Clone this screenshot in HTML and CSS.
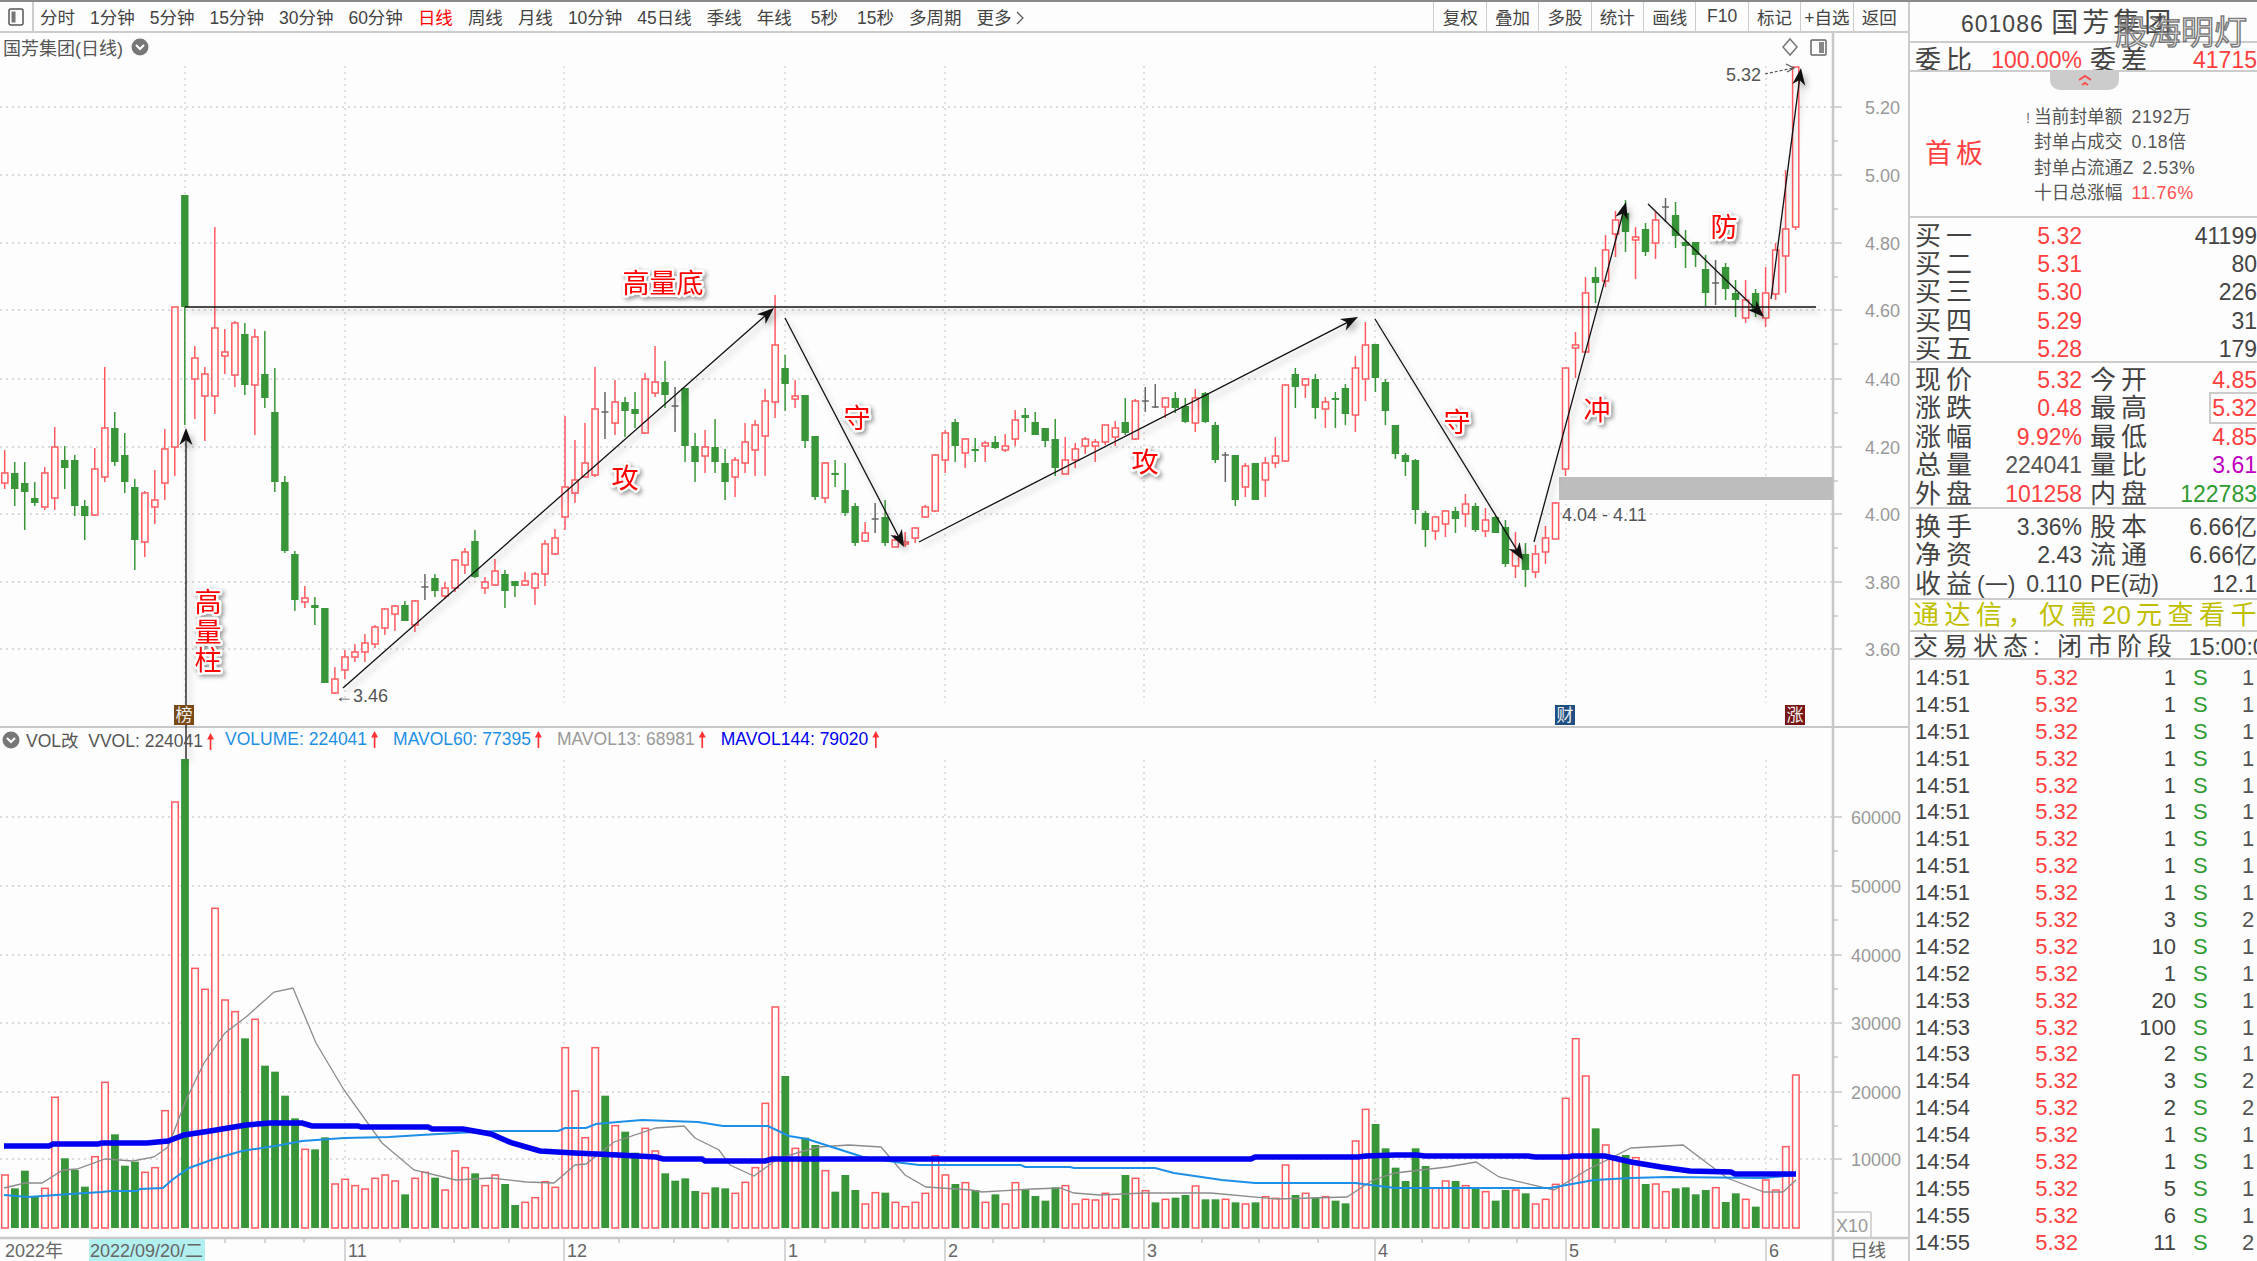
FILE: index.html
```html
<!DOCTYPE html>
<html lang="zh-CN">
<head>
    <meta charset="UTF-8">
    <meta name="viewport" content="width=device-width, initial-scale=1.0">
    <title>国芳集团 日线</title>
    <link rel="stylesheet" href="styles.css">
</head>
<body>
    <div class="main">
        <nav class="toolbar">
            <button class="tool-toggle" type="button">
                <svg width="16" height="18" viewBox="0 0 16 18"><rect x="1" y="1" width="14" height="16" rx="2" fill="none" stroke="#555" stroke-width="1.5"/><rect x="3.5" y="3.5" width="4" height="11" fill="#777"/></svg>
            </button>
            <div class="periods">
                <span>分时</span><span>1分钟</span><span>5分钟</span><span>15分钟</span><span>30分钟</span><span>60分钟</span>
                <span class="active">日线</span><span>周线</span><span>月线</span><span>10分钟</span><span>45日线</span><span>季线</span>
                <span>年线</span><span class="wide">5秒</span><span class="wide">15秒</span><span>多周期</span>
                <span class="more">更多<svg width="8" height="14" viewBox="0 0 8 14"><path d="M1 1l6 6-6 6" fill="none" stroke="#555" stroke-width="1.2"/></svg></span>
            </div>
            <div class="actions">
                <span>复权</span><span>叠加</span><span>多股</span><span>统计</span><span>画线</span><span>F10</span><span>标记</span><span>+自选</span><span>返回</span>
            </div>
        </nav>
        <div class="chart" id="chart">
            <div class="chart-title">国芳集团(日线)
                <svg width="18" height="18" viewBox="0 0 18 18"><circle cx="9" cy="9" r="8.5" fill="#777"/><path d="M5 7l4 4 4-4" fill="none" stroke="#fff" stroke-width="2"/></svg>
            </div>
            <div class="vol-legend">
                <svg width="18" height="18" viewBox="0 0 18 18"><circle cx="9" cy="9" r="8.5" fill="#777"/><path d="M5 7l4 4 4-4" fill="none" stroke="#fff" stroke-width="2"/></svg>
                <span class="gray-dark first">VOL改&nbsp; VVOL: 224041<i></i></span>
                <span class="sky">VOLUME: 224041<i></i></span>
                <span class="sky">MAVOL60: 77395<i></i></span>
                <span class="gray-light">MAVOL13: 68981<i></i></span>
                <span class="blue">MAVOL144: 79020<i></i></span>
            </div>
        </div>
    </div>

    <aside class="panel">
        <div class="watermark">股海明灯</div>
        <div class="stock-name">601086 <b>国芳集团</b></div>

        <section class="ratio">
            <div class="q-row">
                <div class="half"><span class="name">委比</span><span class="red">100.00%</span></div>
                <div class="half"><span class="name">委差</span><span class="red">41715</span></div>
            </div>
        </section>

        <section class="seal">
            <div class="collapse-tab">
                <svg width="18" height="14" viewBox="0 0 18 14"><path d="M3 6l6-4 6 4M6 11l3-2 3 2" fill="none" stroke="#ff4d4d" stroke-width="2"/></svg>
            </div>
            <div class="seal-tag">首板</div>
            <div class="seal-list">
                <div><em>!</em>当前封单额<span>2192万</span></div>
                <div>封单占成交<span>0.18倍</span></div>
                <div>封单占流通Z<span>2.53%</span></div>
                <div>十日总涨幅<span class="red">11.76%</span></div>
            </div>
        </section>

        <section class="book">
            <div class="book-row"><span class="name">买一</span><span class="red">5.32</span><span>41199</span></div>
            <div class="book-row"><span class="name">买二</span><span class="red">5.31</span><span>80</span></div>
            <div class="book-row"><span class="name">买三</span><span class="red">5.30</span><span>226</span></div>
            <div class="book-row"><span class="name">买四</span><span class="red">5.29</span><span>31</span></div>
            <div class="book-row"><span class="name">买五</span><span class="red">5.28</span><span>179</span></div>
        </section>

        <section class="quote">
            <div class="q-row">
                <div class="half"><span class="name">现价</span><span class="red">5.32</span></div>
                <div class="half"><span class="name">今开</span><span class="red">4.85</span></div>
            </div>
            <div class="q-row">
                <div class="half"><span class="name">涨跌</span><span class="red">0.48</span></div>
                <div class="half"><span class="name">最高</span><span class="red boxed">5.32</span></div>
            </div>
            <div class="q-row">
                <div class="half"><span class="name">涨幅</span><span class="red">9.92%</span></div>
                <div class="half"><span class="name">最低</span><span class="red">4.85</span></div>
            </div>
            <div class="q-row">
                <div class="half"><span class="name">总量</span><span class="muted">224041</span></div>
                <div class="half"><span class="name">量比</span><span class="magenta">3.61</span></div>
            </div>
            <div class="q-row">
                <div class="half"><span class="name">外盘</span><span class="red">101258</span></div>
                <div class="half"><span class="name">内盘</span><span class="green">122783</span></div>
            </div>
        </section>

        <section class="fund">
            <div class="q-row">
                <div class="half"><span class="name">换手</span><span>3.36%</span></div>
                <div class="half"><span class="name">股本</span><span>6.66亿</span></div>
            </div>
            <div class="q-row">
                <div class="half"><span class="name">净资</span><span>2.43</span></div>
                <div class="half"><span class="name">流通</span><span>6.66亿</span></div>
            </div>
            <div class="q-row">
                <div class="half"><span class="name">收益<small>(一)</small></span><span>0.110</span></div>
                <div class="half"><span class="name tight">PE(动)</span><span>12.1</span></div>
            </div>
        </section>

        <div class="notice">通达信，仅需<span>20</span>元查看千档</div>
        <div class="status">交易状态: 闭市阶段 <span>15:00:00</span></div>
        <div class="trades" id="trades"></div>
    </aside>

    <script src="chart.js"></script>
</body>
</html>
```

FILE: styles.css
```css
html, body {
    height: 100%;
    margin: 0;
    padding: 0;
}

body {
    display: flex;
    height: 1261px;
    overflow: hidden;
    box-sizing: border-box;
    border-top: 2px solid #8a8a8a;
    background-color: #fdfdfd;
    color: #444;
    font-family: "Liberation Sans", "Noto Sans CJK SC", sans-serif;
}

.main {
    width: 1908px;
    display: flex;
    flex-direction: column;
    flex-shrink: 0;
}

/* top bar */
.toolbar {
    height: 29px;
    display: flex;
    align-items: center;
    border-bottom: 2px solid #ccc;
    font-size: 17.5px;
    color: #444;
}

.tool-toggle {
    width: 34px;
    height: 100%;
    padding: 0;
    display: flex;
    align-items: center;
    justify-content: center;
    background: none;
    border: none;
    border-right: 2px solid #ccc;
}

.periods {
    display: flex;
    gap: 15px;
    margin-left: 6px;
    white-space: nowrap;
}

.periods .active {
    color: #f00;
}

.periods .wide {
    margin-left: 4px;
}

.periods .more svg {
    margin-left: 4px;
    vertical-align: -1px;
}

.actions {
    margin-left: auto;
    padding-right: 3px;
    display: flex;
    height: 100%;
}

.actions span {
    width: 52.4px;
    box-sizing: border-box;
    display: flex;
    align-items: center;
    justify-content: center;
    border-left: 1px solid #ccc;
}

/* chart canvas */
.chart {
    position: relative;
    flex: 1;
}

.chart svg.canvas {
    display: block;
    position: absolute;
    left: 0;
    top: 0;
}

.chart-title {
    position: absolute;
    z-index: 2;
    left: 3px;
    top: 1px;
    display: flex;
    align-items: center;
    gap: 8px;
    font-size: 18px;
    color: #555;
}

.vol-legend {
    position: absolute;
    z-index: 2;
    left: 2px;
    top: 694px;
    display: flex;
    align-items: center;
    gap: 15px;
    font-size: 17.5px;
    white-space: nowrap;
}

.vol-legend svg {
    margin-right: -9px;
}

.vol-legend .first {
    margin-right: -4px;
}

/* little red up arrow behind each legend value */
.vol-legend i {
    display: inline-block;
    width: 7px;
    height: 17px;
    margin-left: 4px;
    vertical-align: -3px;
    background-color: #f33;
    clip-path: polygon(50% 0, 100% 38%, 62% 38%, 62% 100%, 38% 100%, 38% 38%, 0 38%);
}

.gray-dark { color: #555; }
.gray-light { color: #999; }
.sky { color: #1e8fe6; }
.blue { color: #0000f0; }

.axis-text {
    font-size: 18px;
    fill: #999;
    text-anchor: end;
}

.mark-text {
    font-size: 18px;
    fill: #555;
}

.month-text {
    font-size: 18px;
    fill: #666;
}

.badge-text {
    font-size: 17px;
    fill: #eee;
    text-anchor: middle;
}

.marks {
    filter: drop-shadow(3px 4px 3px rgba(0, 0, 0, 0.3));
}

.tag {
    font-size: 27px;
    fill: #f00;
    stroke: #fff;
    stroke-width: 5px;
    stroke-linejoin: round;
    paint-order: stroke;
    text-anchor: middle;
    filter: drop-shadow(2px 2px 2px rgba(0, 0, 0, 0.4));
}

/* right panel */
.panel {
    position: relative;
    flex: 1;
    min-width: 0;
    display: flex;
    flex-direction: column;
    border-left: 2px solid #ccc;
    overflow: hidden;
    font-size: 23px;
    color: #444;
}

.panel section,
.stock-name,
.notice,
.status {
    border-bottom: 2px solid #ccc;
    box-sizing: border-box;
    flex-shrink: 0;
}

.watermark {
    position: absolute;
    z-index: 3;
    left: 205px;
    top: 10px;
    font-size: 33px;
    line-height: 42px;
    white-space: nowrap;
    color: rgba(255, 255, 255, 0.55);
    -webkit-text-stroke: 1.5px rgba(90, 90, 90, 0.8);
}

.stock-name {
    height: 41px;
    padding-left: 51px;
    padding-top: 3px;
    font-size: 23px;
    line-height: 36px;
    letter-spacing: 1px;
    white-space: nowrap;
    overflow: hidden;
}

.stock-name b {
    font-weight: normal;
    font-size: 27px;
    letter-spacing: 4px;
}

.red { color: #ff4040; }
.green { color: #2f9a2f; }
.magenta { color: #c000c0; }
.muted { color: #555; }

.name {
    font-size: 26px;
    letter-spacing: 5px;
    white-space: nowrap;
}

.name small {
    font-size: 23px;
    letter-spacing: 0;
}

.name.tight {
    font-size: 23px;
    letter-spacing: 0;
}

.q-row {
    display: grid;
    grid-template-columns: 1fr 1fr;
    gap: 8px;
    padding-left: 5px;
    height: 28.4px;
    line-height: 28.4px;
}

.half {
    display: flex;
    justify-content: space-between;
    white-space: nowrap;
    position: relative;
}

.ratio {
    height: 29px;
    padding-top: 3px;
    overflow: hidden;
}

.seal {
    height: 146px;
    padding-top: 14px;
    position: relative;
    display: flex;
    align-items: center;
}

.collapse-tab {
    position: absolute;
    left: 140px;
    top: 0;
    width: 69px;
    height: 18px;
    display: flex;
    align-items: center;
    justify-content: center;
    background-color: #ccc;
    border-radius: 0 0 10px 10px;
}

.seal-tag {
    margin-left: 15px;
    width: 109px;
    font-size: 27px;
    letter-spacing: 4px;
    color: #ff4040;
}

.seal-list {
    margin-top: 9px;
    font-size: 17.7px;
    line-height: 25.5px;
    color: #555;
    white-space: nowrap;
}

.seal-list div {
    position: relative;
}

.seal-list em {
    position: absolute;
    left: -8px;
    font-style: normal;
    color: #777;
    font-size: 15px;
}

.seal-list span {
    margin-left: 9px;
    letter-spacing: 0.6px;
}

.seal-list .red {
    color: #ff5050;
}

.book {
    height: 145px;
    padding-top: 4px;
}

.book-row {
    display: grid;
    grid-template-columns: 90px 77px 1fr;
    padding-left: 5px;
    height: 28.2px;
    line-height: 28.2px;
}

.book-row span:nth-child(2),
.book-row span:nth-child(3) {
    text-align: right;
}

.quote {
    height: 146px;
    padding-top: 3px;
}

.boxed {
    position: relative;
}

.boxed::before {
    content: "";
    position: absolute;
    left: -3px;
    right: -6px;
    top: -2px;
    bottom: -1px;
    border: 2px solid #ccc;
}

.fund {
    height: 91px;
    padding-top: 4px;
}

.notice {
    height: 32px;
    padding-left: 3px;
    font-size: 26px;
    line-height: 31px;
    letter-spacing: 5.5px;
    color: #bfbf00;
    white-space: nowrap;
    overflow: hidden;
}

.notice span {
    letter-spacing: 0;
    margin-right: 5px;
}

.status {
    height: 28px;
    padding-left: 3px;
    font-size: 25px;
    line-height: 28px;
    letter-spacing: 5px;
    white-space: nowrap;
    overflow: hidden;
}

.status span {
    font-size: 23px;
    letter-spacing: 0;
}

.trades {
    padding-top: 5px;
}

.trade-row {
    display: grid;
    grid-template-columns: 60px 103px 98px 23px 1fr;
    height: 26.9px;
    line-height: 26.9px;
    padding-left: 5px;
    font-size: 22px;
    white-space: nowrap;
}

.trade-row .price,
.trade-row .vol {
    text-align: right;
}

.trade-row .side {
    padding-left: 17px;
    color: #2f9a2f;
}

.trade-row .last {
    padding-left: 43px;
    color: #555;
}
```

FILE: chart.js
```js
document.addEventListener('DOMContentLoaded', () => {
    const R = 0, G = 1, N = 2;

    // [kind, high, bodyTop, bodyBottom, low] as page y values
    const candles = [
        [R,450,473,483,489],[G,462,473,489,506],[G,462,483,492,530],[G,482,498,503,506],[R,467,473,507,510],
        [R,427,447,498,510],[G,446,460,468,489],[G,455,460,506,516],[G,500,506,516,540],[R,448,469,515,516],
        [R,367,428,477,482],[G,412,428,462,466],[G,433,455,482,493],[G,479,487,540,570],[R,491,493,542,557],
        [R,470,500,507,524],[R,429,449,483,500],[R,307,307,447,476],[G,195,195,307,425],[R,346,358,379,419],
        [R,367,374,396,441],[R,227,328,396,414],[R,329,352,356,374],[R,321,323,375,387],[G,323,334,385,395],
        [R,329,337,385,435],[G,331,374,398,408],[G,368,412,482,492],[G,476,482,551,553],[G,551,554,600,611],
        [R,586,598,602,608],[G,597,605,608,625],[G,608,608,683,683],[R,667,679,693,694],[R,650,657,670,679],
        [R,644,652,657,662],[R,634,643,652,662],[R,625,627,644,648],[R,608,609,628,635],[R,605,606,614,631],
        [G,601,605,621,621],[R,600,601,625,632],[N,574,587,588,600],[G,574,578,591,597],[R,582,588,596,599],
        [R,559,560,588,592],[R,548,552,565,574],[G,530,541,577,578],[R,577,582,588,594],[R,559,571,585,586],
        [G,570,574,591,608],[G,581,581,586,597],[R,572,581,585,586],[R,572,574,588,605],[R,540,544,574,586],
        [R,529,538,554,555],[R,416,487,517,530],[R,440,480,493,503],[R,423,463,477,477],[R,367,409,475,477],
        [N,392,412,413,439],[R,380,402,423,435],[G,397,402,411,437],[G,392,409,414,428],[R,373,379,433,434],
        [R,346,382,393,397],[G,361,382,395,408],[N,387,406,407,432],[G,388,388,446,462],[G,433,446,462,482],
        [R,430,447,456,473],[G,419,447,462,473],[G,449,463,482,500],[R,457,460,477,497],[R,423,442,463,473],
        [R,420,425,450,476],[R,389,401,436,476],[R,295,345,402,418],[G,355,368,384,411],[R,380,396,399,408],
        [G,395,395,441,448],[G,436,436,497,500],[R,462,463,498,503],[G,460,473,475,487],[G,463,490,513,516],
        [G,503,506,543,546],[R,522,533,541,542],[N,503,519,520,533],[G,500,517,543,546],[R,535,540,547,547],
        [R,532,542,544,547],[R,527,528,538,543],[R,505,507,517,518],[R,454,455,511,512],[R,430,433,460,473],
        [G,419,422,446,462],[R,438,439,453,468],[G,438,449,451,462],[R,441,443,446,462],[G,436,442,448,449],
        [R,434,446,450,452],[R,410,420,439,446],[G,408,415,418,432],[G,412,422,435,435],[G,428,428,441,447],
        [G,419,439,468,476],[R,437,460,474,474],[R,443,449,460,468],[R,437,439,446,454],[R,439,442,446,462],
        [R,425,425,442,445],[R,421,428,437,446],[G,398,422,433,435],[R,399,401,439,440],[N,387,401,402,412],
        [N,384,407,407,408],[R,397,398,407,418],[G,392,398,408,413],[G,398,406,422,423],[R,389,398,423,432],
        [G,392,393,422,423],[G,422,425,460,463],[N,452,455,456,482],[G,455,455,500,506],[R,463,466,487,497],
        [G,463,463,500,500],[R,457,463,480,497],[R,437,456,463,468],[R,384,385,461,462],[G,368,374,387,408],
        [R,378,379,385,398],[G,374,379,408,419],[R,397,402,409,428],[G,392,398,400,428],[G,384,388,414,425],
        [R,356,368,415,432],[R,322,345,379,401],[G,344,344,378,392],[G,379,382,411,425],[G,425,425,454,459],
        [G,453,455,462,476],[G,459,460,510,524],[G,511,513,530,547],[R,516,517,531,540],[R,510,511,524,537],
        [G,507,511,519,533],[R,494,504,514,527],[G,503,506,530,532],[R,508,520,531,537],[G,516,517,533,533],
        [G,520,527,564,567],[R,532,552,566,578],[G,543,554,570,587],[R,545,554,572,578],[R,526,538,552,564],
        [R,502,503,539,539],[R,368,368,469,476],[R,332,345,348,378],[R,277,293,352,352],[G,267,277,283,303],
        [R,235,250,281,287],[R,211,220,234,257],[G,200,213,232,252],[R,227,237,240,279],[G,223,229,252,256],
        [R,212,220,243,259],[N,198,207,208,222],[G,202,215,236,248],[G,230,242,246,268],[G,242,242,255,267],
        [G,255,269,293,306],[N,260,283,284,305],[G,263,267,289,300],[G,280,293,300,317],[R,280,300,318,323],
        [G,289,293,310,317],[R,267,293,318,327],[R,243,250,294,300],[R,170,229,256,293],[R,67,67,227,230]
    ];

    // volume bar tops, in thirds of a pixel below y = 860
    const volumes = [
        945,985,932,1010,985,712,895,930,980,890,667,823,917,905,937,923,752,-174,-303,325,
        388,145,420,455,535,478,617,635,707,775,868,868,832,972,958,977,987,955,945,963,
        1003,955,937,953,990,873,923,940,977,945,972,1035,1027,1013,965,982,563,693,833,563,
        707,797,815,878,805,873,940,962,955,993,1000,982,985,1000,967,923,730,441,648,865,
        833,855,932,995,945,990,1032,998,998,1027,1040,1027,1000,887,945,972,968,990,1027,1003,
        1032,968,990,1008,1022,982,977,1032,1018,1020,1000,1018,945,955,992,1027,1018,1013,1005,978,
        1018,1018,1018,1027,1032,1027,1010,1015,915,1005,1000,1012,1010,1022,1030,843,748,792,865,923,
        963,865,918,985,963,963,977,982,995,1022,990,990,1000,1032,1018,973,715,536,648,805,
        855,890,885,893,972,972,995,985,982,1003,990,983,1026,1000,1018,1040,960,990,860,645
    ];
    // R or G per volume bar, twenty days to a chunk
    const volKinds = [
        'RGGGRRGGGRRGGGRRRRGR', 'RRRRGRGGGGRGGRRRRRRR', 'GRRGRRRGRRGGRRRRRRRR', 'GRGGRRGGGGRGGRRRRRGR',
        'GGRGGGRRGRRRRRRGRGRG', 'RRGGGGRRRRRRGRRGRGGR', 'GGRGRGRRRGRGRGGRRGGG', 'GGGRRGRGRGGRGRRRRRRG',
        'RRGRGRRGGGGRGGRGRRRR'
    ].join('');

    const priceGrid = [[107,'5.20'],[175,'5.00'],[243,'4.80'],[310,'4.60'],[379,'4.40'],[447,'4.20'],[514,'4.00'],[582,'3.80'],[649,'3.60']];
    const volGrid = [[817,'60000'],[886,'50000'],[955,'40000'],[1023,'30000'],[1092,'20000'],[1159,'10000']];
    const months = [[345,'11'],[564,'12'],[785,'1'],[945,'2'],[1144,'3'],[1375,'4'],[1566,'5'],[1766,'6']];
    const minorTicks = [225,265,304,400,454,509,619,674,728,825,865,904,993,1044,1202,1259,1318,1422,1469,1517,1615,1666,1715];

    const ma144 = [[4,1146],[49,1146],[53,1144],[98,1144],[102,1143],[147,1143],[168,1141],[184,1135],[210,1131],[246,1125],[270,1123],[302,1123],[312,1126],[358,1126],[361,1127],[428,1127],[432,1129],[463,1129],[491,1134],[512,1143],[540,1151],[575,1153],[618,1155],[656,1157],[663,1159],[702,1159],[705,1161],[765,1161],[772,1159],[1251,1159],[1255,1157],[1358,1157],[1366,1156],[1395,1155],[1417,1155],[1425,1156],[1528,1156],[1535,1157],[1569,1157],[1572,1156],[1605,1156],[1631,1162],[1661,1167],[1690,1171],[1731,1172],[1735,1174],[1796,1174]];
    const ma60 = [[4,1195],[28,1197],[70,1194],[102,1192],[112,1191],[137,1191],[140,1189],[163,1188],[172,1180],[189,1168],[214,1159],[242,1151],[281,1145],[302,1141],[344,1138],[389,1137],[421,1135],[456,1133],[498,1131],[558,1131],[565,1128],[586,1128],[596,1124],[618,1122],[642,1120],[698,1122],[723,1126],[768,1126],[789,1136],[807,1139],[835,1148],[863,1157],[895,1162],[919,1165],[1021,1165],[1025,1167],[1070,1167],[1074,1168],[1155,1168],[1174,1173],[1222,1180],[1255,1183],[1340,1183],[1355,1183],[1395,1188],[1510,1188],[1550,1188],[1594,1180],[1631,1178],[1668,1177],[1764,1178],[1796,1175]];
    const ma13 = [[4,1188],[25,1183],[42,1183],[63,1170],[77,1169],[105,1159],[133,1161],[154,1157],[168,1147],[186,1100],[204,1063],[225,1033],[246,1017],[274,992],[293,988],[316,1043],[344,1090],[382,1143],[414,1170],[456,1180],[491,1178],[526,1182],[554,1183],[575,1165],[586,1164],[614,1142],[656,1128],[684,1126],[695,1138],[719,1150],[730,1165],[754,1176],[779,1158],[818,1147],[849,1145],[881,1147],[905,1175],[926,1187],[972,1190],[982,1192],[1032,1189],[1060,1188],[1074,1193],[1100,1195],[1144,1193],[1211,1193],[1277,1199],[1347,1197],[1373,1180],[1395,1173],[1447,1167],[1476,1162],[1499,1177],[1554,1190],[1587,1170],[1631,1148],[1683,1145],[1727,1178],[1764,1192],[1783,1192],[1796,1180]];

    const RED = '#ff5a60', GREEN = '#389638', GRID = '#cfcfcf', LINE = '#c8c8c8';
    const barX = i => 4.7 + i * 10.005;
    const pts = list => list.map(p => p.join(',')).join(' ');

    let svg = '';
    const line = (x1, y1, x2, y2, stroke, width, extra = '') => {
        svg += `<line x1="${x1}" y1="${y1}" x2="${x2}" y2="${y2}" stroke="${stroke}" stroke-width="${width}" ${extra}/>`;
    };

    // Grid
    const dots = 'stroke-dasharray="2 4"';
    priceGrid.concat(volGrid).forEach(([y]) => line(0, y, 1833, y, GRID, 1.5, dots));
    [185].concat(months.map(m => m[0])).forEach(x => {
        line(x, 66, x, 703, GRID, 1.2, dots);
        line(x, 760, x, 1228, GRID, 1.2, dots);
    });

    // Frame and axes
    line(0, 727, 1908, 727, LINE, 2);
    line(1833, 33, 1833, 1261, LINE, 2.5);
    line(0, 1238, 1908, 1238, LINE, 2.5);
    priceGrid.forEach(([y, text], i) => {
        line(1833, y, 1842, y, LINE, 1.5);
        if (i < priceGrid.length - 1) line(1833, y + 34, 1838, y + 34, LINE, 1.5);
        svg += `<text class="axis-text" x="1900" y="${y + 7}">${text}</text>`;
    });
    volGrid.forEach(([y, text]) => {
        line(1833, y, 1842, y, LINE, 1.5);
        line(1833, y + 34, 1838, y + 34, LINE, 1.5);
        svg += `<text class="axis-text" x="1901" y="${y + 7}">${text}</text>`;
    });

    // Volume bars
    volumes.forEach((v, i) => {
        const x = barX(i), top = 860 + v / 3;
        if (volKinds[i] === 'R') {
            svg += `<rect x="${x - 3}" y="${top}" width="6.5" height="${1228 - top}" fill="#fdfdfd" stroke="${RED}" stroke-width="1.5"/>`;
        } else {
            svg += `<rect x="${x - 3.7}" y="${top}" width="7.8" height="${1228 - top}" fill="${GREEN}"/>`;
        }
    });
    svg += `<polyline points="${pts(ma13)}" fill="none" stroke="#8c8c8c" stroke-width="1.3"/>`;
    svg += `<polyline points="${pts(ma60)}" fill="none" stroke="#1e8fe6" stroke-width="2"/>`;
    svg += `<polyline points="${pts(ma144)}" fill="none" stroke="#0000f0" stroke-width="5.5"/>`;

    // Candles
    candles.forEach(([kind, hi, top, bot, lo], i) => {
        const x = barX(i);
        if (kind === N) {
            line(x, hi, x, lo, '#666', 1.5);
            line(x - 3.5, top, x + 3.5, top, '#666', 1.5);
        } else if (kind === G) {
            line(x, hi, x, lo, GREEN, 1.5);
            svg += `<rect x="${x - 3.7}" y="${top}" width="7.4" height="${Math.max(bot - top, 2)}" fill="${GREEN}"/>`;
        } else {
            line(x, hi, x, top, RED, 1.5);
            line(x, bot, x, lo, RED, 1.5);
            svg += `<rect x="${x - 3}" y="${top}" width="6.2" height="${bot - top}" fill="#fdfdfd" stroke="${RED}" stroke-width="1.5"/>`;
        }
    });

    // Support band and price marks
    svg += '<rect x="1559" y="477" width="274" height="23" fill="#bdbdbd"/>';
    svg += '<text class="mark-text" x="1562" y="521">4.04 - 4.11</text>';
    svg += '<text class="mark-text" x="335" y="702">←3.46</text>';
    svg += '<text class="mark-text" x="1726" y="81">5.32</text>';
    line(1765, 74, 1793, 68, '#555', 1.2, 'stroke-dasharray="3 2"');
    svg += '<path d="M1786 64l8 4-7 4" fill="none" stroke="#555" stroke-width="1.2"/>';

    // Small icons on the top right of the chart
    svg += '<polygon points="1790,39 1797,47 1790,55 1783,47" fill="none" stroke="#777" stroke-width="1.5"/>';
    svg += '<rect x="1811" y="40" width="15" height="15" rx="1" fill="#fff" stroke="#666" stroke-width="1.5"/><rect x="1819" y="42" width="5" height="11" fill="#888"/>';

    // Drawn trend arrows
    const arrow = (x1, y1, x2, y2) => {
        const a = Math.atan2(y2 - y1, x2 - x1), c = Math.cos(a), s = Math.sin(a);
        const at = (along, side) => `${x2 - along * c - side * s},${y2 - along * s + side * c}`;
        return `<line x1="${x1}" y1="${y1}" x2="${at(8, 0).split(',')[0]}" y2="${at(8, 0).split(',')[1]}" stroke="#111" stroke-width="1.3"/>` +
            `<polygon points="${x2},${y2} ${at(17, 6.5)} ${at(12, 0)} ${at(17, -6.5)}" fill="#111"/>`;
    };
    svg += '<g class="marks"><line x1="185" y1="307" x2="1816" y2="307" stroke="#111" stroke-width="1.6"/>';
    [
        [186,759,186,428],[343,688,774,308],[785,318,904,547],[919,542,1358,317],
        [1375,319,1523,560],[1534,542,1626,202],[1648,204,1764,317],[1771,299,1801,68]
    ].forEach(a => { svg += arrow(...a); });
    svg += '</g>';

    // Hand written notes
    [
        [663,293,'高量底'],[208,612,'高'],[208,642,'量'],[208,670,'柱'],[625,488,'攻'],
        [857,428,'守'],[1145,472,'攻'],[1457,432,'守'],[1597,420,'冲'],[1724,237,'防']
    ].forEach(([x, y, text]) => {
        svg += `<text class="tag" x="${x}" y="${y}">${text}</text>`;
    });

    // Event badges
    [[184,'#7a4a16','榜'],[1565,'#1f4f82','财'],[1795,'#7a1616','涨']].forEach(([x, color, text]) => {
        svg += `<rect x="${x - 10}" y="705" width="20" height="20" fill="${color}"/>`;
        svg += `<text class="badge-text" x="${x}" y="721">${text}</text>`;
    });

    // Time axis
    minorTicks.forEach(x => line(x, 1238, x, 1243, LINE, 1.5));
    months.forEach(([x, text]) => {
        line(x, 1238, x, 1261, LINE, 1.5);
        svg += `<text class="month-text" x="${x + 3}" y="1257">${text}</text>`;
    });
    svg += '<text class="month-text" x="5" y="1257">2022年</text>';
    svg += '<rect x="89" y="1239" width="116" height="22" fill="#b2efef"/>';
    svg += '<text class="month-text" x="90" y="1257">2022/09/20/二</text>';
    line(1871, 1212, 1871, 1238, LINE, 1.5);
    line(1833, 1212, 1871, 1212, LINE, 1.5);
    svg += '<text class="axis-text" x="1868" y="1232">X10</text>';
    svg += '<text class="month-text" x="1850" y="1257">日线</text>';

    const chart = document.getElementById('chart');
    const box = document.createElement('div');
    box.innerHTML = `<svg class="canvas" width="1908" height="1228" viewBox="0 33 1908 1228">${svg}</svg>`;
    chart.prepend(box.firstChild);

    // Tick list on the right panel
    const trades = [
        ['14:51',1,1],['14:51',1,1],['14:51',1,1],['14:51',1,1],['14:51',1,1],['14:51',1,1],['14:51',1,1],['14:51',1,1],['14:51',1,1],
        ['14:52',3,2],['14:52',10,1],['14:52',1,1],['14:53',20,1],['14:53',100,1],['14:53',2,1],
        ['14:54',3,2],['14:54',2,2],['14:54',1,1],['14:54',1,1],['14:55',5,1],['14:55',6,1],['14:55',11,2]
    ];
    const list = document.getElementById('trades');
    trades.forEach(([time, vol, last]) => {
        const row = document.createElement('div');
        row.className = 'trade-row';
        row.innerHTML = `<span>${time}</span><span class="price red">5.32</span><span class="vol">${vol}</span><span class="side">S</span><span class="last">${last}</span>`;
        list.appendChild(row);
    });
});
```
